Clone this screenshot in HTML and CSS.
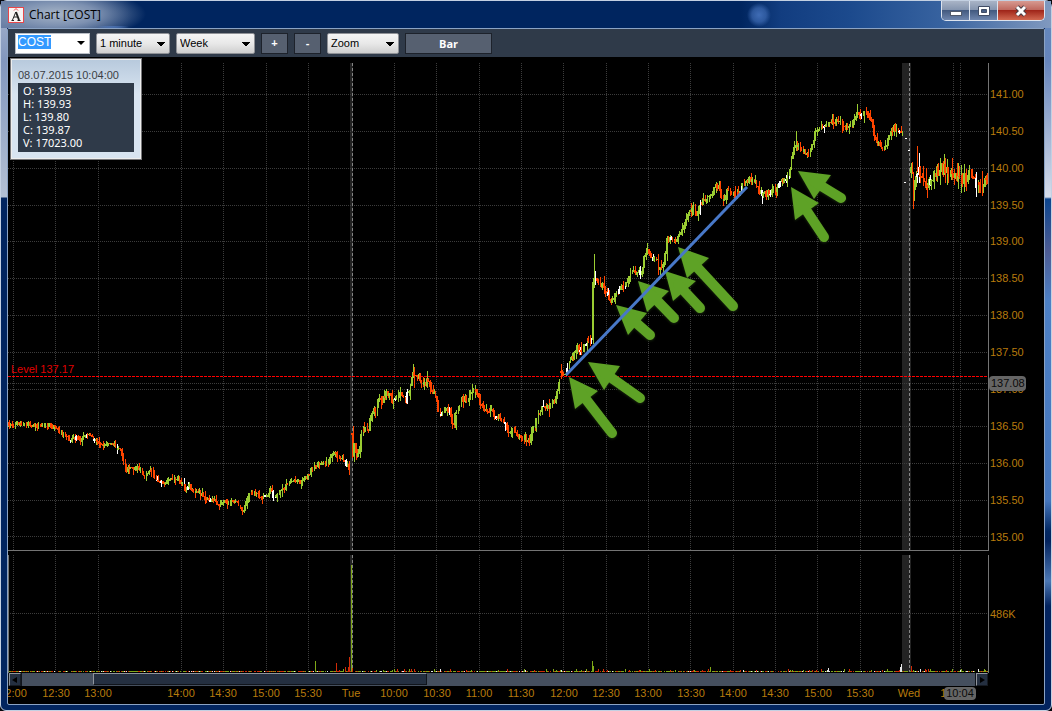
FILE: index.html
```html
<!DOCTYPE html>
<html lang="en">
<head>
<meta charset="utf-8">
<title>Chart [COST]</title>
<link rel="stylesheet" href="styles.css">
</head>
<body>
<div class="window">
  <header class="titlebar">
    <svg class="app-icon" width="16" height="16" viewBox="0 0 16 16" aria-hidden="true">
      <rect x=".5" y=".5" width="15" height="15" fill="#f8f4f4" stroke="#e8474a"/>
      <path d="M4.500 13 7.800 5M6 10H10M3.500 13.500H6M9.500 13.500H12.500" fill="none" stroke="#222"/>
      <path d="M8 5 11 13" stroke="#222" stroke-width="2"/>
      <path d="M6 3.500 8 1.500 10 3.500" fill="none" stroke="#e8474a"/>
    </svg>
    <h1 class="title">Chart [COST]</h1>
    <div class="controls">
      <button class="ctl" aria-label="Minimize"><svg width="14" height="12" viewBox="0 0 14 12"><rect x="1.500" y="6.500" width="11" height="4" fill="#fff" stroke="#515a6b"/></svg></button>
      <button class="ctl" aria-label="Maximize"><svg width="14" height="12" viewBox="0 0 14 12"><path fill-rule="evenodd" d="M1.500 1.500h11v9h-11zM4.500 4.500h5v3h-5z" fill="#fff" stroke="#414d66"/></svg></button>
      <button class="ctl ctl-close" aria-label="Close"><svg width="14" height="12" viewBox="0 0 14 12"><path d="M3 2 11 10M11 2 3 10" stroke="#4a3b43" stroke-width="5"/><path d="M3 2 11 10M11 2 3 10" stroke="#fff" stroke-width="3"/></svg></button>
    </div>
  </header>
  <main class="client">
    <div class="toolbar">
      <div class="combo">
        <input class="combo-input" id="symbol" type="text" value="COST" aria-label="Symbol">
        <button class="combo-arrow" aria-label="Show symbols"></button>
      </div>
      <select class="pick pick-interval" aria-label="Interval"><option>1 minute</option></select>
      <select class="pick pick-range" aria-label="Range"><option>Week</option></select>
      <button class="tool">+</button>
      <button class="tool">-</button>
      <select class="pick pick-zoom" aria-label="Zoom"><option>Zoom</option></select>
      <button class="tool tool-bar">Bar</button>
    </div>
    <div class="chart">
      <svg class="plot" id="plot" viewBox="8 57 1036 616" role="img" aria-label="COST price and volume">
        <g id="bands"></g>
        <g id="grid" class="grid"></g>
        <g class="frame">
          <path d="M988.500 63V550.500H8M988.500 555V673M8.500 555V673"/>
        </g>
        <g class="session"><path d="M352.500 63V550M352.500 555V672M909.500 63V550M909.500 555V672"/></g>
        <g id="volume" shape-rendering="crispEdges"></g>
        <path class="level-line" d="M8 376.500H988"/>
        <text class="level-text" x="11" y="373">Level 137.17</text>
        <g id="bars" shape-rendering="crispEdges"></g>
        <g id="prices" class="axis"></g>
        <rect class="pill" x="989" y="376" width="37" height="15" rx="4"/>
        <text class="pill-text" x="991" y="387">137.08</text>
        <g id="arrows" class="arrows"></g>
        <path class="trend" d="M566 375 747 187"/>
      </svg>
      <div class="scroll">
        <button class="scroll-btn" aria-label="Scroll left"><svg width="6" height="6" viewBox="0 0 6 6"><path d="M5 0V6L0 3z"/></svg></button>
        <div class="track"><div class="thumb"></div></div>
        <button class="scroll-btn" aria-label="Scroll right"><svg width="6" height="6" viewBox="0 0 6 6"><path d="M1 0V6L6 3z"/></svg></button>
      </div>
      <svg class="times" viewBox="8 686 1036 18" role="img" aria-label="Time axis">
        <g id="times" class="axis"></g>
        <rect class="pill" x="944" y="687" width="32" height="13" rx="4"/>
        <text class="pill-text" x="960" y="697" text-anchor="middle">10:04</text>
      </svg>
      <aside class="quote">
        <p class="quote-time">08.07.2015 10:04:00</p>
        <ul class="quote-list">
          <li>O: 139.93</li><li>H: 139.93</li><li>L: 139.80</li><li>C: 139.87</li><li>V: 17023.00</li>
        </ul>
      </aside>
    </div>
  </main>
</div>
<script src="chart.js"></script>
</body>
</html>
```
FILE: styles.css
```css
* { box-sizing: border-box; }
body { margin: 0; background: #05070c; font-family: "Liberation Sans", Arial, sans-serif; font-size: 12px; }
button, input, select { font: inherit; margin: 0; }
.window {
  min-height: 100vh;
  display: flex;
  flex-direction: column;
  padding: 0 6px 5px;
  border: 1px solid #c3d0e2;
  border-radius: 7px 7px 6px 6px;
  background:
    linear-gradient(180deg, #a9b6cc 0, #8297bd 60px, #b3c0d4 196px, transparent 197px) left / 6px 100% no-repeat,
    linear-gradient(180deg, #6288bc 0, #6685bc 60px, #d5dcea 196px, #0c458e 198px, #4d5c94 250px, #4d80c5 300px, #4576bd 500px, #022863 530px, #03235e 540px, #4c78b5 580px, #03235e 605px) right / 6px 100% no-repeat,
    #02255f;
}
.titlebar {
  height: 27px;
  display: flex;
  align-items: center;
  gap: 5px;
  margin: 0 -6px;
  padding: 0 6px;
  background:
    radial-gradient(ellipse at 112px 26px, #5b87d2 0, #5b87d2aa 16px, transparent 24px) no-repeat,
    radial-gradient(ellipse 90px 26px at 55px 13px, #a7b5c7 0, #7d91b1 45%, transparent 100%) no-repeat,
    radial-gradient(circle at calc(100% - 292px) 14px, #3f6cb5 0, #3f6cb5aa 7px, transparent 12px) no-repeat,
    linear-gradient(90deg, #5b719b 0, #00255f 130px, #00255f calc(100% - 310px), #123d80 calc(100% - 270px), #1c4a8d calc(100% - 200px), #37629f calc(100% - 110px), #8099bf 100%);
}
.app-icon { margin-left: 1px; }
.title { flex: 1; margin: 0; font: 12px "Open Sans", "Noto Sans", sans-serif; color: #000; }
.controls { align-self: flex-start; display: flex; height: 20px; border: 1px solid #dce3ee; border-top: 0; border-radius: 0 0 5px 5px; overflow: hidden; }
.ctl { width: 28px; padding: 0; border: 0; border-right: 1px solid #dce3ee; display: grid; place-items: center; background: linear-gradient(#a9b4c6, #8696b0 45%, #435a80 50%, #6f86ad); }
.ctl-close { width: 46px; border-right: 0; background: linear-gradient(#d79a91, #c06a60 45%, #a0261a 50%, #d16850); }
.client { flex: 1; display: flex; flex-direction: column; border: 1px solid #8ba3c4; border-radius: 2px; background: #000; }
.toolbar { height: 28px; display: flex; align-items: center; gap: 6px; padding: 0 7px; background: #2f3a49; }
.combo { width: 75px; height: 21px; display: flex; background: #fff; border: 1px solid #b9bec6; }
.combo-input { flex: 1; min-width: 0; height: 17px; border: 0; outline: 0; padding: 0 0 0 2px; background: transparent; }
.combo-input::selection { background: #3399ff; color: #fff; }
.combo-arrow { width: 17px; border: 0; padding: 0; background: transparent; display: grid; place-items: center; }
.combo-arrow::before { content: ""; border: 4px solid transparent; border-top-color: #000; border-bottom: 0; }
.pick {
  appearance: none;
  height: 21px;
  padding: 0 3px;
  border: 1px solid #8f9196;
  border-radius: 2px;
  color: #000;
  font-size: 11px;
  background:
    linear-gradient(to bottom left, #000 50%, transparent 51%) right 8px top 8px / 4px 4px no-repeat,
    linear-gradient(to bottom right, #000 50%, transparent 51%) right 4px top 8px / 4px 4px no-repeat,
    linear-gradient(#f5f5f5, #e8e8e8 50%, #cfcfcf);
}
.pick-interval { width: 74px; }
.pick-range { width: 79px; }
.pick-zoom { width: 72px; }
.tool { width: 27px; height: 21px; padding: 0; border: 1px solid #1d222b; background: #566070; color: #fff; font-weight: bold; font-size: 11px; }
.tool-bar { width: 87px; font-family: "Open Sans", sans-serif; }
.chart { position: relative; flex: 1; }
.plot, .times { display: block; width: 100%; height: auto; }
.grid { stroke: #3c3c3c; stroke-dasharray: 1 1; fill: none; shape-rendering: crispEdges; }
.band { fill: #232323; }
.frame { stroke: #747474; fill: none; shape-rendering: crispEdges; }
.session { stroke: #858585; stroke-dasharray: 3 2; shape-rendering: crispEdges; }
.level-line { stroke: #ff0000; stroke-width: 1; stroke-dasharray: 3 1; fill: none; }
.level-text { fill: #e00000; font-size: 11px; }
.axis { fill: #b87b0c; font-size: 11px; }
.pill { fill: #656565; }
.pill-text { fill: #0a0a0a; font-size: 11px; }
.trend { stroke: #4878c8; stroke-width: 3; }
.arrows { fill: #5ea226; stroke: #5ea226; stroke-linecap: round; filter: drop-shadow(0 1px 1px #17280c); }
.up { fill: #9acd32; }
.down { fill: #ff4500; }
.flat { fill: #fff; }
.scroll { height: 13px; display: flex; gap: 1px; margin-right: 56px; padding-left: 1px; background: #10141b; }
.scroll-btn { width: 12px; padding: 0; border: 1px solid #8f949c; border-right-color: #151a22; border-bottom-color: #151a22; background: #242f40; display: grid; place-items: center; }
.track { flex: 1; background: #454f5e; }
.thumb { width: 35%; height: 12px; margin-left: 7.5%; background: #242f40; border: 1px solid #8f949c; border-right-color: #10141b; border-bottom-color: #10141b; }
.quote { position: absolute; left: 2px; top: 1px; width: 132px; padding: 9px 7px 7px; border: 1px solid #77777a; outline: 1px solid #eee; outline-offset: -2px; background: linear-gradient(#b7c9dc, #d8e4f1 35px); }
.quote-time { margin: 0; font-size: 11px; line-height: 14px; color: #3b3f45; }
.quote-list { margin: 1px 0 0; padding: 1px 5px 3px; list-style: none; background: #2f3a49; color: #fff; font: 11px/13px "Noto Sans", sans-serif; }
```
FILE: chart.js
```js
const NS = "http://www.w3.org/2000/svg";
const byId = id => document.getElementById(id);
function add(parent, tag, attrs, text) {
  const el = document.createElementNS(NS, tag);
  for (const k in attrs) el.setAttribute(k, attrs[k]);
  if (text) el.textContent = text;
  parent.appendChild(el);
  return el;
}
let seed = 7;
function rnd() {
  seed = (seed * 16807) % 2147483647;
  return seed / 2147483647;
}

const columns = [13, 55, 98, 181, 223, 266, 308, 394, 436, 479, 521, 563, 606, 648, 690, 733, 775, 817, 860, 953, 960];
const rows = [94, 131, 168, 205, 241, 278, 315, 352, 383, 389, 426, 463, 500, 536, 613];
columns.forEach(x => add(byId("grid"), "path", { d: `M${x + 0.5} 63V550M${x + 0.5} 555V672` }));
rows.forEach(y => add(byId("grid"), "path", { d: `M8 ${y + 0.5}H988` }));

[[350, 3], [902, 9]].forEach(([x, width]) => {
  add(byId("bands"), "rect", { class: "band", x, width, y: 63, height: 487 });
  add(byId("bands"), "rect", { class: "band", x, width, y: 555, height: 117 });
});

const priceRows = [94, 131, 168, 205, 241, 278, 315, 352, 389, 426, 463, 500, 537];
priceRows.forEach((y, i) => add(byId("prices"), "text", { x: 990, y: y + 4 }, (141 - i * 0.5).toFixed(2)));
add(byId("prices"), "text", { x: 990, y: 618 }, "486K");

const times = [[13, "12:00"], [56, "12:30"], [98, "13:00"], [181, "14:00"], [223, "14:30"], [266, "15:00"], [308, "15:30"],
  [351, "Tue"], [394, "10:00"], [437, "10:30"], [479, "11:00"], [521, "11:30"], [564, "12:00"], [606, "12:30"], [648, "13:00"],
  [691, "13:30"], [733, "14:00"], [775, "14:30"], [818, "15:00"], [860, "15:30"], [909, "Wed"], [954, "10:00"]];
times.forEach(([x, t]) => add(byId("times"), "text", { x, y: 697, "text-anchor": "middle" }, t));

/* Each session: bar half-range, then x,y pairs of the price path */
const sessions = [
  [2.6, "8,424 20,424 30,424 37,425 50,425 56,427 60,431 66,435 71,440 76,437 80,440 85,437 89,433 93,438 98,441 103,445 108,443 114,443 118,448 121,448"],
  [3.2, "121,449 123,456 126,470 130,467 133,469 140,467 142,472 145,478 147,476 150,468 153,474 157,480 161,481 164,484 168,482 172,478 178,478 182,483 186,490 190,486 194,492 200,493 206,498 209,501 213,498 219,504 224,502 230,501 237,501 239,506 242,509 245,508 247,498 250,494 256,494 262,496 267,496 271,489 274,497 278,494 283,489 289,483 295,481 300,482 305,478 309,475 314,465 319,464 324,463 328,462 332,454 336,452 340,456 344,460 348,466 350,472"],
  [4.6, "352,433 353,457 355,443 358,459 361,442 363,425 365,432 367,425 368,433 370,418 374,412 378,403 380,396 383,400 387,392 391,397 394,401 397,394 400,391 404,395 406,402 409,390 412,377 414,370 417,380 419,375 421,381 424,385 428,381 431,386 434,392 437,400 439,413 442,415 447,407 450,410 454,425 456,413 460,403 464,398 469,397 472,391 475,388 480,400 484,407 488,409 493,412 497,416 502,419 506,424 510,433 514,428 517,436 521,436 525,437 529,443 532,432 536,424 539,412 543,406 547,406 551,406 554,402 557,395 559,383 560,371"],
  [4.4, "561,371 566,372 570,358 574,356 578,347 580,353 584,347 588,340 592,340 593,284 595,278 597,277 600,287 603,286 606,290 610,300 614,298 618,292 624,286 629,276 634,268 638,274 643,269 647,249 650,252 654,258 658,262 660,270 665,258 668,237 671,240 675,240 680,232 686,225 690,210 694,205 697,213 701,203 705,198 710,195 716,186 720,185 723,200 728,190 734,194 738,192 742,186 746,184 750,179 756,183 760,192 766,194 772,191 777,190 780,182 787,181 790,170 793,150 796,146 799,144 803,148 807,155 812,150 816,130 820,126 826,127 832,122 838,121 843,124 848,127 853,123 858,114 862,113 866,108 868,113 872,122 876,138 880,147 885,148 890,134 895,126 899,131 903,131"],
  [10, "911,172 914,186 917,168 920,168 925,175 928,188 931,176 938,172 943,168 948,174 953,175 959,181 965,178 971,174 976,184 980,189 984,185 988,180"]
];
function bar(cls, x, top, bottom, width = 1) {
  add(byId("bars"), "rect", { class: cls, x, y: Math.round(top), width, height: Math.max(1, Math.round(bottom) - Math.round(top)) });
}
sessions.forEach(([range, path]) => {
  const pts = path.split(" ").map(p => p.split(",").map(Number));
  const priceAt = x => {
    let i = 1;
    while (i < pts.length - 1 && pts[i][0] < x) i++;
    const [x0, y0] = pts[i - 1], [x1, y1] = pts[i];
    return y0 + (y1 - y0) * Math.min(1, (x - x0) / (x1 - x0));
  };
  let open = pts[0][1];
  for (let x = pts[0][0]; x <= pts[pts.length - 1][0]; x += 1.4) {
    const close = priceAt(x) + (rnd() - 0.5) * range * 1.3;
    const wick = () => rnd() * rnd() * range * 2;
    const cls = rnd() < 0.06 ? "flat" : close < open ? "up" : "down";
    const px = Math.floor(x);
    const low = Math.max(open, close) + 1;
    bar(cls, px, Math.min(open, close) - wick(), low + wick());
    if (rnd() < 0.7) bar(cls, px - 1, Math.min(open, close), low);
    open = close;
  }
});
/* Isolated prints and long wicks */
[["up", 594, 254, 280], ["up", 796, 131, 148], ["down", 917, 146, 172], ["up", 914, 180, 201], ["down", 927, 185, 198],
 ["down", 352, 433, 458], ["down", 414, 367, 388], ["up", 456, 415, 430], ["down", 561, 364, 379]]
  .forEach(([cls, x, a, b]) => bar(cls, x, a, b));
[[905, 138], [908, 150], [904, 182]].forEach(([x, y]) => bar("flat", x, y, y + 1, 2));

function vol(x, h, fill) {
  add(byId("volume"), "rect", { x, y: 672 - h, width: 1, height: h, fill });
}
const green = "#7fa817", red = "#d22b06", pale = "#e6e6e6";
for (let x = 9; x < 988; x++) {
  if (rnd() < 0.2) continue;
  const r = rnd();
  const h = x > 352 && rnd() < 0.13 ? 2 + Math.floor(rnd() * 2) : 1;
  vol(x, h, r < 0.48 ? green : r < 0.88 ? red : pale);
}
[[315, 11, green], [336, 9, red], [339, 2, red], [343, 3, green], [345, 5, red], [348, 5, red], [349, 15, red], [351, 107, green],
 [352, 4, red], [394, 3, green], [404, 3, red], [411, 3, red], [576, 3, green], [586, 3, green], [592, 11, green], [593, 6, green],
 [598, 3, red], [710, 5, green], [828, 4, pale], [900, 5, pale], [901, 8, pale], [911, 6, red], [952, 3, green]]
  .forEach(v => vol(...v));

/* tip, two head corners, tail */
[[569, 377, 575, 409, 598, 391, 612, 433], [588, 362, 604, 390, 620, 366, 640, 398], [616, 305, 628, 335, 647, 313, 650, 335],
 [638, 281, 647, 312, 669, 291, 674, 318], [665, 271, 673, 301, 696, 281, 700, 308], [678, 247, 687, 278, 709, 258, 733, 306],
 [798, 171, 814, 199, 831, 175, 841, 198], [791, 187, 795, 220, 819, 203, 824, 237]]
  .forEach(([tx, ty, ax, ay, bx, by, ex, ey]) => {
    add(byId("arrows"), "path", { d: `M${tx} ${ty}L${ax} ${ay}L${bx} ${by}Z`, "stroke-width": 0 });
    const mx = (tx + ax + bx) / 3, my = (ty + ay + by) / 3;
    add(byId("arrows"), "path", { d: `M${mx} ${my}L${ex} ${ey}`, "stroke-width": 10 });
  });

const symbol = byId("symbol");
symbol.focus();
symbol.select();
```
